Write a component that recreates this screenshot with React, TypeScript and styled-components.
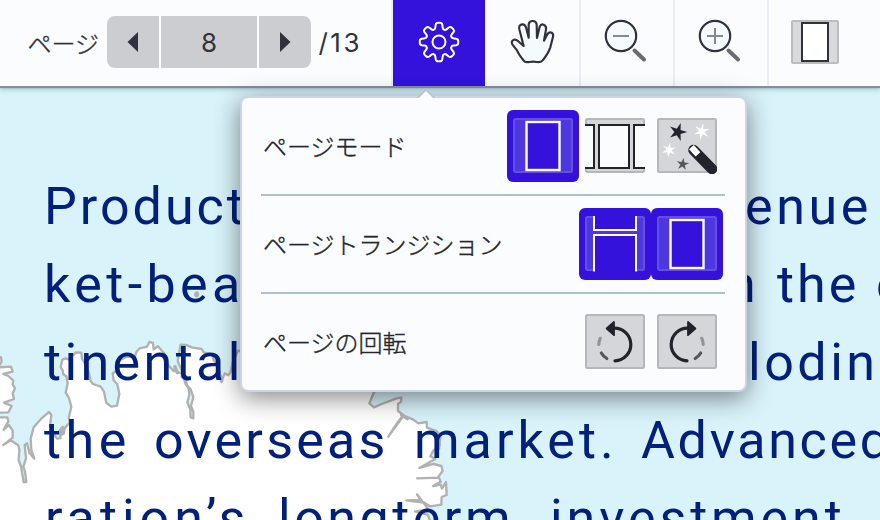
import React from "react";
import styled, { createGlobalStyle } from "styled-components";

const accent = "#3412db";
const ink = "#30313d";

const GlobalStyle = createGlobalStyle`
  * { box-sizing: border-box; }
  body { margin: 0; overflow: hidden; }
  button { border: 0; padding: 0; background: none; font: inherit; color: inherit; }
  svg { display: block; }
`;

const Viewer = styled.div`
  position: relative;
  display: flex;
  flex-direction: column;
  width: 880px;
  height: 520px;
  overflow: hidden;
  background: #d9f3fa;
  color: ${ink};
  font-family: Inter, "Noto Sans CJK JP", sans-serif;
`;

const Toolbar = styled.header`
  display: flex;
  flex: none;
  height: 86px;
  background: #fbfcfe;
  box-shadow: 0 1px 1px 1px #84909c, 0 3px 5px rgba(40, 60, 80, 0.3);
  z-index: 1;
`;

const Pager = styled.div`
  display: flex;
  align-items: center;
  width: 391px;
  padding: 0 0 2px 27px;
  font-size: 26px;
`;

const PagerLabel = styled.span`
  width: 80px;
  padding-left: 0.5px;
  font-family: "Noto Sans CJK JP", sans-serif;
  font-size: 24px;
  font-weight: 300;
  -webkit-text-stroke: 0.4px currentColor;
`;

const PagerGroup = styled.div`
  display: flex;
  gap: 2px;
  width: 204px;
  height: 52px;
  border-radius: 8px;
  overflow: hidden;
`;

const PagerCell = styled.button<{ $wide?: boolean }>`
  display: flex;
  align-items: center;
  justify-content: center;
  width: ${(p) => (p.$wide ? 96 : 52)}px;
  height: 52px;
  background: #cccdd1;
`;

const Total = styled.span`
  margin-left: 7.5px;
  letter-spacing: 2.5px;
`;

const ToolButton = styled.button<{ $active?: boolean; $divided?: boolean }>`
  display: flex;
  align-items: center;
  justify-content: center;
  width: 94px;
  height: 86px;
  padding-bottom: 2px;
  background: ${(p) => (p.$active ? accent : "transparent")};
  background-clip: padding-box;
  border-left: ${(p) => (p.$divided ? "2px solid #ebecf5" : "0")};
`;

const Page = styled.main`
  position: relative;
  flex: 1;
  padding-top: 82px;
  font-family: Roboto, sans-serif;
  font-size: 52px;
  color: #00207c;
`;

const Coast = styled.svg`
  position: absolute;
  left: 0;
  top: -86px;
`;

const Line = styled.div`
  position: relative;
  display: flex;
  height: 78px;
  line-height: 78px;
  white-space: nowrap;
`;

const Word = styled.span<{ $gap: number; $width: number; $track: number }>`
  flex: none;
  margin-left: ${(p) => p.$gap}px;
  width: ${(p) => p.$width}px;
  letter-spacing: ${(p) => p.$track}px;
`;

const Popup = styled.section`
  position: absolute;
  left: 240px;
  top: 96px;
  width: 507px;
  height: 296px;
  padding: 0 20px 0 19px;
  border: 2px solid #ccd5e5;
  border-radius: 8px;
  background: #fbfcfe;
  box-shadow: 0 6px 26px rgba(0, 0, 0, 0.48);
  z-index: 2;
`;

const Pointer = styled.i`
  position: absolute;
  left: 177px;
  top: -7px;
  width: 14px;
  height: 14px;
  background: #fbfcfe;
  border: 2px solid #b5c1d7;
  border-right: 0;
  border-bottom: 0;
  transform: rotate(45deg);
  clip-path: polygon(0 0, 100% 0, 0 100%);
`;

const Row = styled.div`
  display: flex;
  align-items: center;
  justify-content: space-between;
  height: 98px;
  padding: 0 2px;
  border-bottom: 2px solid #afbfd2;
  &:last-child { height: 96px; border-bottom: 0; }
`;

const RowLabel = styled.span`
  color: #24252d;
  font-family: "Noto Sans CJK JP", sans-serif;
  font-size: 24px;
  font-weight: 300;
  line-height: 36px;
  -webkit-text-stroke: 0.4px currentColor;
`;

const Options = styled.div`
  display: flex;
`;

const Option = styled.button<{ $selected?: boolean }>`
  display: flex;
  align-items: center;
  justify-content: center;
  width: 72px;
  height: 72px;
  border-radius: 6px;
  background: ${(p) => (p.$selected ? accent : "transparent")};
`;

const rotated = (deg: number, x: number, y: number) => {
  const a = (deg * Math.PI) / 180;
  return `${(x * Math.cos(a) - y * Math.sin(a)).toFixed(2)} ${(x * Math.sin(a) + y * Math.cos(a)).toFixed(2)}`;
};

const gearPath =
  `M${rotated(0, -5.13, -12.4)}` +
  Array.from({ length: 8 }, (_, i) => {
    const p = (x: number, y: number) => rotated(i * 45, x, y);
    return `Q${p(-3.9, -12.4)} ${p(-3.6, -15)}L${p(-3.3, -17.2)}Q${p(-2.9, -19.2)} ${p(-1, -19.2)}L${p(1, -19.2)}Q${p(2.9, -19.2)} ${p(3.3, -17.2)}L${p(3.6, -15)}Q${p(3.9, -12.4)} ${p(5.13, -12.4)}`;
  }).join("") +
  "Z";

const Gear = () => (
  <svg width="48" height="48" viewBox="-24 -24 48 48" fill="none" stroke="#fff" strokeWidth="2" strokeLinejoin="round">
    <path d={gearPath} />
    <circle r="6.5" />
  </svg>
);

const Hand = () => (
  <svg width="48" height="48" viewBox="384 54 144 144" fill="#f5fafd" stroke={ink} strokeWidth="6.5" strokeLinejoin="round">
    <path d="M432 183Q416 163 411 151L397 133Q392 122 402 119Q408 118 414 123L431 138L418 88Q415 75 426 73Q435 72 438 82L446 113V73Q448 63 458 63Q468 63 470 73L471 114L479 80Q483 71 491 74Q500 78 498 88L492 122L502 103Q507 95 515 98Q521 102 519 110L511 142Q506 158 489 180Q484 188 470 186Q459 184 448 186Q437 188 432 183Z" />
  </svg>
);

const Magnifier = ({ plus }: { plus?: boolean }) => (
  <svg width="48" height="48" fill="none">
    <path d="M31.5 32.5L41 41.5" stroke="#696c75" strokeWidth="4" strokeLinecap="round" />
    <circle cx="18" cy="18" r="15.2" fill="#f5fafd" stroke={ink} strokeWidth="2.2" />
    <path d={plus ? "M10 18H26M18 10V26" : "M10 18H26"} stroke="#858993" strokeWidth="2" />
  </svg>
);

const PageTool = () => (
  <svg width="48" height="48">
    <rect x="1" y="3" width="46" height="42" rx="1" fill="#d9dadc" stroke="#bbbcbe" strokeWidth="2" />
    <rect x="11" y="5" width="26" height="38" fill="#fff" stroke={ink} strokeWidth="2" />
  </svg>
);

const OptionIcon = ({ selected, children }: { selected?: boolean; children: React.ReactNode }) => (
  <svg width="60" height="56" fill="none">
    <rect
      x="1" y="1" width="58" height="53" rx="1.5"
      fill={selected ? "#4f37df" : "#d5d6da"}
      stroke={selected ? "#644ee3" : "#b5b7ba"}
      strokeWidth="2"
    />
    {children}
  </svg>
);

const SinglePage = () => (
  <OptionIcon selected>
    <rect x="13.5" y="4" width="33" height="48" fill={accent} stroke="#fff" strokeWidth="2.4" />
  </OptionIcon>
);

const SpreadPages = () => (
  <OptionIcon>
    <g fill="#fbfcfe" stroke="#22232b" strokeWidth="2">
      <path d="M-2 7H9V50H-2" />
      <rect x="14" y="7" width="30" height="43" />
      <path d="M62 7H49V50H62" />
    </g>
  </OptionIcon>
);

const ScrollPages = () => (
  <OptionIcon selected>
    <g fill={accent} stroke="#fff" strokeWidth="2">
      <path d="M9 0V14H51V0" />
      <path d="M9 55.5V19H51V55.5" />
    </g>
  </OptionIcon>
);

const star = (cx: number, cy: number, r: number, points: number, turn: number) =>
  Array.from({ length: points * 2 }, (_, i) => {
    const a = ((turn + (i * 180) / points) * Math.PI) / 180;
    const d = i % 2 ? r * 0.36 : r;
    return `${(cx + d * Math.sin(a)).toFixed(2)},${(cy - d * Math.cos(a)).toFixed(2)}`;
  }).join(" ");

const Wand = () => (
  <OptionIcon>
    <polygon points={star(20.8, 14, 9.5, 5, 18)} fill="#22232b" />
    <polygon points={star(44.7, 13.6, 8.2, 6, 10)} fill="#fff" />
    <polygon points={star(12, 32, 7.5, 6, 8)} fill="#fff" />
    <polygon points={star(25.7, 46.2, 6.6, 5, 8)} fill="#55565c" />
    <path d="M36.5 32L55 51" stroke="#22232b" strokeWidth="10.5" strokeLinecap="round" />
    <path d="M36.5 31.5L38.8 34" stroke="#fff" strokeWidth="6.4" strokeLinecap="square" />
  </OptionIcon>
);

const Rotate = ({ clockwise }: { clockwise?: boolean }) => (
  <OptionIcon>
    <g transform={clockwise ? "translate(60 0) scale(-1 1)" : undefined} strokeWidth="3.2" strokeLinecap="round">
      <path d="M29 14.2A16.3 16.3 0 1 1 30 46.8" stroke="#22232b" />
      <path d="M21.6 14.5L29 8V21.2Z" fill="#22232b" stroke="#22232b" strokeWidth="1.8" strokeLinejoin="round" />
      <path d="M15.2 24.3Q14 27 13.8 30.3" stroke="#939499" />
      <path d="M16.3 39Q18.5 42.5 21.8 44.5" stroke="#55565c" />
    </g>
  </OptionIcon>
);

const Coastline = () => (
  <Coast width="880" height="520" viewBox="0 0 880 520">
    <g transform="translate(0 170) scale(.33333)" fill="#fff" stroke="#b1b1b1" strokeWidth="7" strokeLinejoin="round" strokeLinecap="round">
      <path d="M-8 558L3 562L5 575L-6 592L33 590L38 605L10 612L25 618L40 632L38 643L45 655L38 670L42 687L12 698L35 708L25 727L-8 728" />
      <path d="M-10 742L22 742L25 754L11 779L27 765L38 782L38 803L10 825L32 811L55 826L58 840L56 870L63 890L66 908L71 936L79 936L75 905L70 890L78 865L74 825L81 820L88 848L103 866L94 840L92 805L101 772L125 745L147 726L154 735L150 770L165 798L172 806L182 804L178 783L188 770L183 795L191 791L194 775L210 756L206 744L214 711L207 684L197 668L203 640L199 619L190 613L188 601L182 591L187 569L197 565L206 568L228 547L244 548L246 566L259 587L267 610L272 633L279 642L302 650L312 665L319 699L335 710L351 707L358 671L352 643L341 631L338 610L354 600L348 588L349 576L380 560L405 561L409 546L419 535L441 530L448 516L459 519L461 538L474 529L486 543L493 550L501 582L522 604L524 594L534 607L547 611L557 643L566 655L568 674L562 697L571 718L572 742L580 745L580 725L573 708L580 681L572 658L561 646L558 631L545 621L546 604L533 573L542 524L559 525L576 532L605 537L611 547L637 554L640 568L657 595L661 620L664 635L667 628L674 610L685 616L691 608L699 574L714 542L1125 660L1115 683L1108 700L1122 712L1145 702L1188 686L1204 682L1203 695L1194 702L1194 723L1210 735L1186 767L1165 800L1211 737L1240 749L1255 760L1280 756L1281 773L1310 783L1322 797L1318 827L1300 842L1291 859L1306 867L1258 894L1301 882L1324 888L1328 903L1313 923L1251 925L1317 923L1322 935L1299 948L1322 944L1326 956L1338 936L1340 975L1325 981L1324 1004L1290 1009L1268 995L1251 973L1261 990L1219 991L1270 998L1285 1019L1245 1024L1283 1034L1293 1060L-10 1060Z" />
      <ellipse cx="590" cy="373" rx="4" ry="6" fill="#b1b1b1" />
      <path d="M525 590L532 608M662 620L665 633M1318 810L1316 835M1205 735L1222 746" strokeWidth="10" />
    </g>
  </Coast>
);

type Piece = [text: string, gap: number, width: number, track: number];

const lines: Piece[][] = [
  [["Product", 44, 210, 3], ["enue", 491, 140, 3.6]],
  [["ket-bea", 44, 210, 4.4], ["n", 473, 40, 2.6], ["the", 10, 92, 3], ["e", 7, 40, 2.6]],
  [["tinental", 44, 210, 3.4], ["lodin", 494, 140, 3.5]],
  [["the", 44, 90, 4.6], ["overseas", 20, 240, 3.2], ["market.", 20, 205, 4], ["Advanced", 22, 260, 2.7]],
  [["ration’s", 45, 210, 5], ["longterm", 23, 240, 3.5], ["investment", 32, 300, 3.9]],
];

export default function App() {
  return (
    <Viewer>
      <GlobalStyle />
      <Toolbar>
        <Pager>
          <PagerLabel>ページ</PagerLabel>
          <PagerGroup>
            <PagerCell>
              <svg width="12" height="20"><path d="M11 0V20L0.5 10Z" fill={ink} /></svg>
            </PagerCell>
            <PagerCell $wide>8</PagerCell>
            <PagerCell>
              <svg width="12" height="20"><path d="M1 0V20L11.5 10Z" fill={ink} /></svg>
            </PagerCell>
          </PagerGroup>
          <Total>/13</Total>
        </Pager>
        <ToolButton $active $divided><Gear /></ToolButton>
        <ToolButton><Hand /></ToolButton>
        <ToolButton $divided><Magnifier /></ToolButton>
        <ToolButton $divided><Magnifier plus /></ToolButton>
        <ToolButton $divided><PageTool /></ToolButton>
      </Toolbar>
      <Page>
        <Coastline />
        {lines.map((line, i) => (
          <Line key={i}>
            {line.map(([text, gap, width, track]) => (
              <Word key={text} $gap={gap} $width={width} $track={track}>{text}</Word>
            ))}
          </Line>
        ))}
      </Page>
      <Popup>
        <Pointer />
        <Row>
          <RowLabel>ページモード</RowLabel>
          <Options>
            <Option $selected><SinglePage /></Option>
            <Option><SpreadPages /></Option>
            <Option><Wand /></Option>
          </Options>
        </Row>
        <Row>
          <RowLabel>ページトランジション</RowLabel>
          <Options>
            <Option $selected><ScrollPages /></Option>
            <Option $selected><SinglePage /></Option>
          </Options>
        </Row>
        <Row>
          <RowLabel>ページの回転</RowLabel>
          <Options>
            <Option><Rotate /></Option>
            <Option><Rotate clockwise /></Option>
          </Options>
        </Row>
      </Popup>
    </Viewer>
  );
}
